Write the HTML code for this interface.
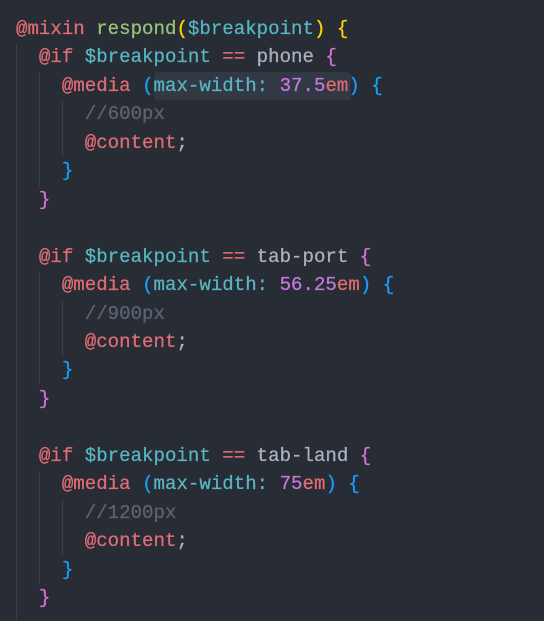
<!DOCTYPE html>
<html><head><style>
html,body{margin:0;padding:0;background:#282c34;width:544px;height:621px;overflow:hidden}
pre{margin:0;position:absolute;left:16px;top:15px;font-family:"Liberation Mono",monospace;font-size:19.1px;line-height:28.45px;color:#abb2bf;-webkit-text-stroke:0.25px currentColor}
.k{color:#e06c75}.f{color:#98c379}.v{color:#56b6c2}.y{color:#ffd700}.p{color:#da70d6}.b{color:#179fff}.c{color:#5c6370}.n{color:#c678dd}
.g{position:absolute;width:1px;background:#3b4048}
.hl{position:absolute;left:154px;top:72px;width:197px;height:28px;background:#323844;border-radius:4px}
</style></head><body>
<div class="hl"></div>
<div class="g" style="left:16px;top:44px;height:577px"></div>
<div class="g" style="left:39px;top:72px;height:114px"></div>
<div class="g" style="left:62px;top:100px;height:57px"></div>
<div class="g" style="left:39px;top:271px;height:114px"></div>
<div class="g" style="left:62px;top:300px;height:57px"></div>
<div class="g" style="left:39px;top:471px;height:114px"></div>
<div class="g" style="left:62px;top:499px;height:57px"></div>
<pre><span class="k">@mixin</span> <span class="f">respond</span><span class="y">(</span><span class="v">$breakpoint</span><span class="y">)</span> <span class="y">{</span>
  <span class="k">@if</span> <span class="v">$breakpoint</span> <span class="k">==</span> phone <span class="p">{</span>
    <span class="k">@media</span> <span class="b">(</span><span class="v">max-width:</span> <span class="n">37.5</span><span class="k">em</span><span class="b">)</span> <span class="b">{</span>
      <span class="c">//600px</span>
      <span class="k">@content</span>;
    <span class="b">}</span>
  <span class="p">}</span>

  <span class="k">@if</span> <span class="v">$breakpoint</span> <span class="k">==</span> tab-port <span class="p">{</span>
    <span class="k">@media</span> <span class="b">(</span><span class="v">max-width:</span> <span class="n">56.25</span><span class="k">em</span><span class="b">)</span> <span class="b">{</span>
      <span class="c">//900px</span>
      <span class="k">@content</span>;
    <span class="b">}</span>
  <span class="p">}</span>

  <span class="k">@if</span> <span class="v">$breakpoint</span> <span class="k">==</span> tab-land <span class="p">{</span>
    <span class="k">@media</span> <span class="b">(</span><span class="v">max-width:</span> <span class="n">75</span><span class="k">em</span><span class="b">)</span> <span class="b">{</span>
      <span class="c">//1200px</span>
      <span class="k">@content</span>;
    <span class="b">}</span>
  <span class="p">}</span></pre>
</body></html>
